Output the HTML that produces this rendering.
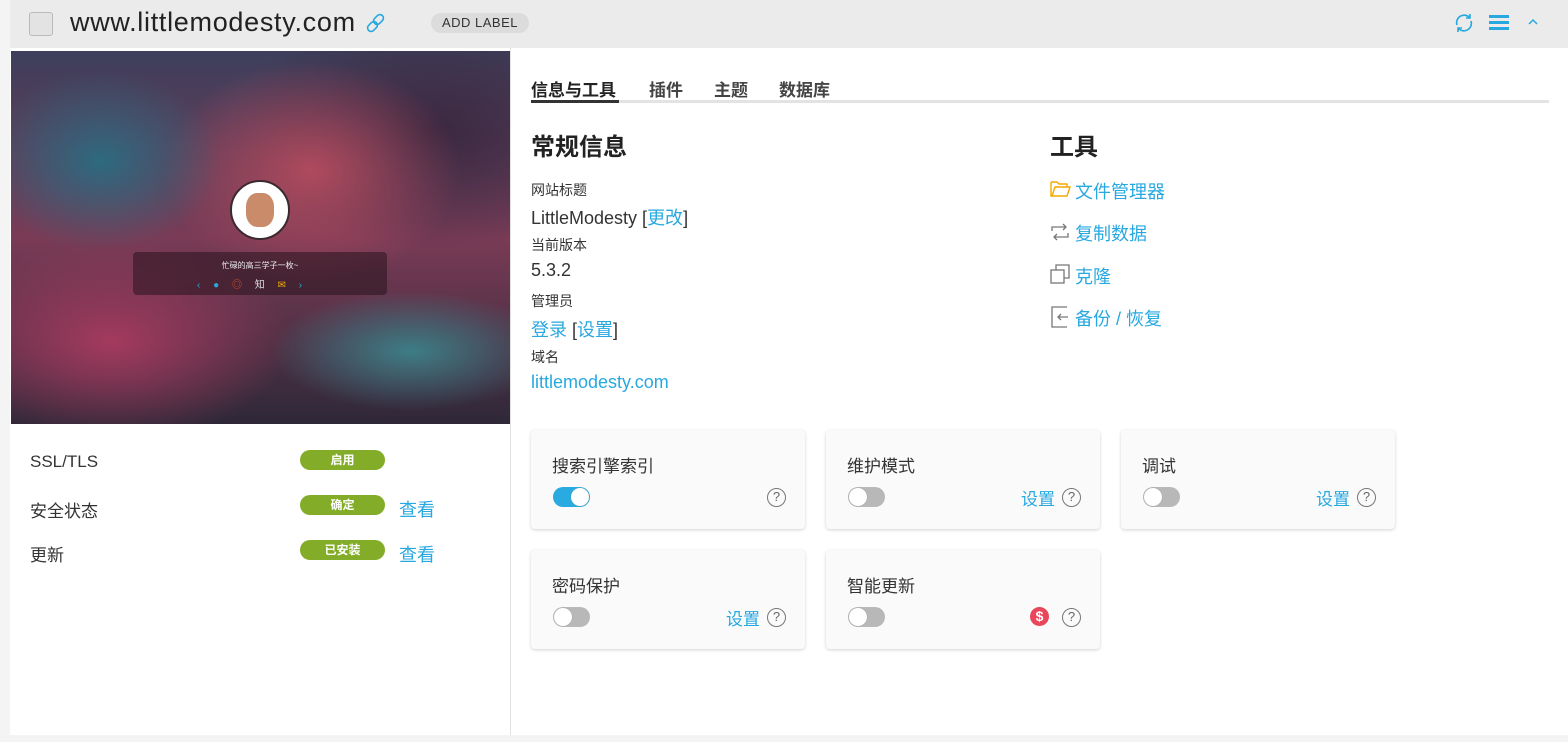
<!DOCTYPE html>
<html><head><meta charset="utf-8"><style>
*{box-sizing:border-box;margin:0;padding:0}
body{width:1568px;height:742px;background:#f4f4f4;font-family:"Liberation Sans","Noto Sans CJK SC",sans-serif;position:relative;overflow:hidden;color:#333}
.hdr{position:absolute;left:10px;top:0;width:1558px;height:48px;background:#ebebeb}
.abs{position:absolute}
.blue{color:#28a8e0}
.card{position:absolute;width:274px;height:99px;background:#fafafa;border-radius:4px;box-shadow:0 1px 3px rgba(0,0,0,.18)}
.card .t{position:absolute;left:21px;top:22px;font-size:17px;color:#333}
.tg{position:absolute;left:22px;top:57px;width:37px;height:20px;border-radius:10px;background:#b8b8b8}
.tg::after{content:"";position:absolute;left:1px;top:1px;width:18px;height:18px;border-radius:50%;background:#fff;box-shadow:0 0 1px #888}
.tg.on{background:#29abe2}.tg.on::after{left:18px}
.q{position:absolute;top:58px;width:19px;height:19px;border:1.5px solid #777;border-radius:50%;font-size:13px;line-height:16px;text-align:center;color:#666}
.set{position:absolute;top:55px;font-size:17px;color:#28a8e0}
.badge{position:absolute;left:300px;width:85px;height:20px;border-radius:10px;background:#83ad28;color:#fff;font-size:12px;font-weight:bold;text-align:center;line-height:20px}
</style></head><body>
<div class="hdr"></div>
<div class="abs" style="left:29px;top:12px;width:24px;height:24px;border:1px solid #bbb;border-radius:3px;background:#e3e3e3"></div>
<div class="abs" style="left:70px;top:7px;font-size:27px;color:#222;letter-spacing:0.7px">www.littlemodesty.com</div>
<svg class="abs" style="left:365px;top:12px" width="22" height="22" viewBox="0 0 22 22" fill="none" stroke="#28a8e0" stroke-width="1.6"><rect x="10" y="2" width="7" height="11" rx="3.5" transform="rotate(45 13.5 7.5)"/><rect x="4" y="9" width="7" height="11" rx="3.5" transform="rotate(45 7.5 14.5)"/></svg>
<div class="abs" style="left:431px;top:13px;width:98px;height:20px;border-radius:10px;background:#dcdcdc;font-size:13px;line-height:20px;text-align:center;color:#333;letter-spacing:.5px">ADD LABEL</div>
<svg class="abs" style="left:1453px;top:12px" width="22" height="22" viewBox="0 0 22 22" fill="none" stroke="#28a8e0" stroke-width="1.6"><path d="M4 13A7.5 7.5 0 0 1 17 6"/><path d="M18 9A7.5 7.5 0 0 1 5 16"/><path d="M17 2v4h-4M5 20v-4h4"/></svg>
<div class="abs" style="left:1489px;top:15px;width:20px;height:3px;background:#28a8e0;box-shadow:0 6px 0 #28a8e0,0 12px 0 #28a8e0"></div>
<svg class="abs" style="left:1527px;top:17px" width="12" height="10" viewBox="0 0 12 10" fill="none" stroke="#28a8e0" stroke-width="1.5"><path d="M2 7l4-4 4 4"/></svg>

<div class="abs" style="left:10px;top:48px;width:501px;height:687px;background:#fff;border-right:1px solid #e2e2e2"></div>
<div class="abs" style="left:511px;top:48px;width:1057px;height:687px;background:#fff"></div>

<div class="abs" style="left:11px;top:51px;width:499px;height:373px;overflow:hidden;background:
radial-gradient(ellipse 120px 90px at 90px 110px,#2d6a80,transparent),
radial-gradient(ellipse 150px 110px at 300px 120px,#b04a5d,transparent),
radial-gradient(ellipse 180px 100px at 100px 290px,#a43a5e,transparent),
radial-gradient(ellipse 140px 60px at 400px 300px,#3d7d86,transparent),
radial-gradient(ellipse 200px 120px at 420px 80px,#3a2840,transparent),
linear-gradient(180deg,#3d3f5c 0%,#7a3b56 50%,#2e2838 100%)">
<div class="abs" style="left:219px;top:129px;width:60px;height:60px;border-radius:50%;background:#fff;border:2px solid #3a2a30"></div>
<div class="abs" style="left:235px;top:142px;width:28px;height:34px;border-radius:40%;background:#c98b6a"></div>
<div class="abs" style="left:122px;top:201px;width:254px;height:43px;border-radius:4px;background:rgba(40,20,30,.55)"></div>
<div class="abs" style="left:122px;top:209px;width:254px;text-align:center;font-size:8px;color:#eee">忙碌的高三学子一枚~</div>
<div class="abs" style="left:186px;top:225px;width:130px;font-size:10px;color:#ddd;word-spacing:10px"><span style="color:#28a8e0">‹</span> <span style="color:#28a8e0">●</span> <span style="color:#e05030">◎</span> 知 <span style="color:#f0b000">✉</span> <span style="color:#28a8e0">›</span></div>
</div>

<div class="abs" style="left:30px;top:452px;font-size:17px">SSL/TLS</div>
<div class="abs" style="left:30px;top:497px;font-size:17px">安全状态</div>
<div class="abs" style="left:30px;top:541px;font-size:17px">更新</div>
<div class="badge" style="top:450px">启用</div>
<div class="badge" style="top:495px">确定</div>
<div class="badge" style="top:540px">已安装</div>
<div class="abs blue" style="left:399px;top:496px;font-size:18px">查看</div>
<div class="abs blue" style="left:399px;top:541px;font-size:18px">查看</div>

<div class="abs" style="left:531px;top:100px;width:1018px;height:3px;background:#e3e3e3"></div>
<div class="abs" style="left:531px;top:100px;width:88px;height:3px;background:#333"></div>
<div class="abs" style="left:531px;top:76px;font-size:17px;font-weight:bold;color:#222">信息与工具</div>
<div class="abs" style="left:649px;top:76px;font-size:17px;font-weight:bold;color:#444">插件</div>
<div class="abs" style="left:714px;top:76px;font-size:17px;font-weight:bold;color:#444">主题</div>
<div class="abs" style="left:779px;top:76px;font-size:17px;font-weight:bold;color:#444">数据库</div>

<div class="abs" style="left:531px;top:127px;font-size:24px;font-weight:bold;color:#222">常规信息</div>
<div class="abs" style="left:531px;top:180px;font-size:14px">网站标题</div>
<div class="abs" style="left:531px;top:204px;font-size:18px">LittleModesty [<span class="blue">更改</span>]</div>
<div class="abs" style="left:531px;top:235px;font-size:14px">当前版本</div>
<div class="abs" style="left:531px;top:260px;font-size:18px">5.3.2</div>
<div class="abs" style="left:531px;top:291px;font-size:14px">管理员</div>
<div class="abs" style="left:531px;top:316px;font-size:18px"><span class="blue">登录</span> [<span class="blue">设置</span>]</div>
<div class="abs" style="left:531px;top:347px;font-size:14px">域名</div>
<div class="abs blue" style="left:531px;top:372px;font-size:18px">littlemodesty.com</div>

<div class="abs" style="left:1050px;top:127px;font-size:24px;font-weight:bold;color:#222">工具</div>
<svg class="abs" style="left:1050px;top:180px" width="22" height="18" viewBox="0 0 22 18" fill="none" stroke="#f4a800" stroke-width="1.4"><path d="M1 2h6l2 2h8v3M1 2v14h16l3-9H5L2 16"/></svg>
<div class="abs blue" style="left:1075px;top:178px;font-size:18px">文件管理器</div>
<svg class="abs" style="left:1050px;top:223px" width="20" height="18" viewBox="0 0 20 18" fill="none" stroke="#777" stroke-width="1.3"><path d="M2 8V4h14M13 1l3 3-3 3M18 10v4H4M7 17l-3-3 3-3"/></svg>
<div class="abs blue" style="left:1075px;top:220px;font-size:18px">复制数据</div>
<svg class="abs" style="left:1050px;top:264px" width="20" height="20" viewBox="0 0 20 20" fill="none" stroke="#777" stroke-width="1.3"><rect x="1" y="6" width="13" height="13"/><path d="M6 6V1h13v13h-5"/></svg>
<div class="abs blue" style="left:1075px;top:263px;font-size:18px">克隆</div>
<svg class="abs" style="left:1050px;top:306px" width="20" height="22" viewBox="0 0 20 22" fill="none" stroke="#777" stroke-width="1.3"><path d="M17 1H2v20h15M18 11H8M11 8l-3 3 3 3"/></svg>
<div class="abs blue" style="left:1075px;top:305px;font-size:18px">备份 / 恢复</div>

<div class="card" style="left:531px;top:430px"><div class="t">搜索引擎索引</div><div class="tg on"></div><div class="q" style="left:236px">?</div></div>
<div class="card" style="left:826px;top:430px"><div class="t">维护模式</div><div class="tg"></div><div class="set" style="left:195px">设置</div><div class="q" style="left:236px">?</div></div>
<div class="card" style="left:1121px;top:430px"><div class="t">调试</div><div class="tg"></div><div class="set" style="left:195px">设置</div><div class="q" style="left:236px">?</div></div>
<div class="card" style="left:531px;top:550px"><div class="t">密码保护</div><div class="tg"></div><div class="set" style="left:195px">设置</div><div class="q" style="left:236px">?</div></div>
<div class="card" style="left:826px;top:550px"><div class="t">智能更新</div><div class="tg"></div><div class="abs" style="left:204px;top:57px;width:19px;height:19px;border-radius:50%;background:#e8465a;color:#fff;font-size:14px;font-weight:bold;text-align:center;line-height:19px">$</div><div class="q" style="left:236px">?</div></div>
</body></html>
